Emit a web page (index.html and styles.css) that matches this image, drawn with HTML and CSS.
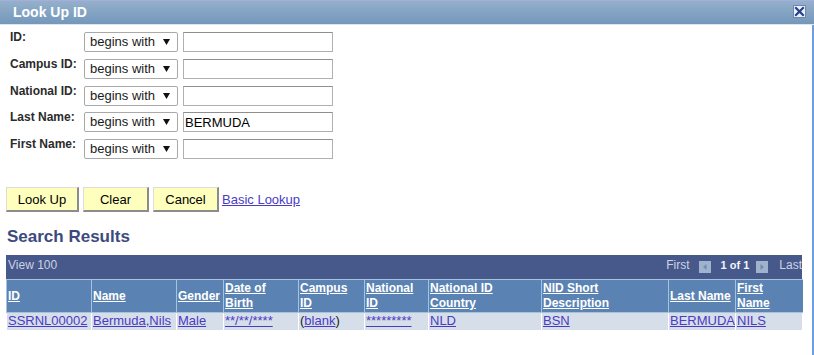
FILE: index.html
```html
<!DOCTYPE html>
<html lang="en">
<head>
<meta charset="utf-8">
<title>Look Up ID</title>
<link rel="stylesheet" href="styles.css">
</head>
<body>
<div class="titlebar">
  <span class="title">Look Up ID</span>
  <button class="close" type="button" aria-label="Close">
    <svg width="13" height="13" viewBox="0 0 13 13">
      <rect x="0.5" y="0.5" width="12" height="12" fill="#eef1f8" stroke="#6f86ad"/>
      <path d="M3 3 L10 10 M10 3 L3 10" stroke="#23408f" stroke-width="2.2" stroke-linecap="square"/>
    </svg>
  </button>
</div>
<div class="page">
  <form class="criteria">
    <div class="row">
      <label class="lbl">ID:</label>
      <div class="sel"><span>begins with</span><svg class="tri" width="7" height="6" viewBox="0 0 7 6"><path d="M0 0 H7 L3.5 6 Z" fill="#111"/></svg></div>
      <input class="txt" type="text" value="">
    </div>
    <div class="row">
      <label class="lbl">Campus ID:</label>
      <div class="sel"><span>begins with</span><svg class="tri" width="7" height="6" viewBox="0 0 7 6"><path d="M0 0 H7 L3.5 6 Z" fill="#111"/></svg></div>
      <input class="txt" type="text" value="">
    </div>
    <div class="row">
      <label class="lbl">National ID:</label>
      <div class="sel"><span>begins with</span><svg class="tri" width="7" height="6" viewBox="0 0 7 6"><path d="M0 0 H7 L3.5 6 Z" fill="#111"/></svg></div>
      <input class="txt" type="text" value="">
    </div>
    <div class="row">
      <label class="lbl">Last Name:</label>
      <div class="sel"><span>begins with</span><svg class="tri" width="7" height="6" viewBox="0 0 7 6"><path d="M0 0 H7 L3.5 6 Z" fill="#111"/></svg></div>
      <input class="txt" type="text" value="BERMUDA">
    </div>
    <div class="row">
      <label class="lbl">First Name:</label>
      <div class="sel"><span>begins with</span><svg class="tri" width="7" height="6" viewBox="0 0 7 6"><path d="M0 0 H7 L3.5 6 Z" fill="#111"/></svg></div>
      <input class="txt" type="text" value="">
    </div>
  </form>

  <div class="actions">
    <button class="btn btn-wide" type="button">Look Up</button>
    <button class="btn" type="button">Clear</button>
    <button class="btn" type="button">Cancel</button>
    <a class="basic" href="#">Basic Lookup</a>
  </div>

  <h2 class="results">Search Results</h2>

  <div class="grid">
    <div class="gridbar">
      <span class="view">View 100</span>
      <div class="nav">
        <span class="navtxt">First</span>
        <svg class="arrow a1" width="12" height="12" viewBox="0 0 12 12"><rect width="12" height="12" fill="#9fb4cc"/><path d="M7.5 3 V9 L4 6 Z" fill="#6f8db3"/></svg>
        <span class="count">1 of 1</span>
        <svg class="arrow a2" width="12" height="12" viewBox="0 0 12 12"><rect width="12" height="12" fill="#9fb4cc"/><path d="M4.5 3 V9 L8 6 Z" fill="#6f8db3"/></svg>
        <span class="navtxt">Last</span>
      </div>
    </div>
    <table class="tbl">
      <colgroup>
        <col class="c85"><col class="c85"><col class="c47"><col class="c75"><col class="c66"><col class="c64"><col class="c113"><col class="c127"><col class="c67"><col class="c67">
      </colgroup>
      <thead>
        <tr>
          <th><a href="#">ID</a></th>
          <th><a href="#">Name</a></th>
          <th><a href="#">Gender</a></th>
          <th><a href="#">Date of<br>Birth</a></th>
          <th><a href="#">Campus<br>ID</a></th>
          <th><a href="#">National<br>ID</a></th>
          <th><a href="#">National ID<br>Country</a></th>
          <th><a href="#">NID Short<br>Description</a></th>
          <th><a href="#">Last Name</a></th>
          <th><a href="#">First<br>Name</a></th>
        </tr>
      </thead>
      <tbody>
        <tr>
          <td><a href="#">SSRNL00002</a></td>
          <td><a href="#">Bermuda,Nils</a></td>
          <td><a href="#">Male</a></td>
          <td><a class="small" href="#">**/**/****</a></td>
          <td>(<a href="#">blank</a>)</td>
          <td><a class="small" href="#">*********</a></td>
          <td><a href="#">NLD</a></td>
          <td><a href="#">BSN</a></td>
          <td><a href="#">BERMUDA</a></td>
          <td><a href="#">NILS</a></td>
        </tr>
      </tbody>
    </table>
  </div>
</div>
</body>
</html>
```
FILE: styles.css
```css
html, body {
  margin: 0;
  padding: 0;
  background: #ffffff;
  font-family: Arial, "Liberation Sans", sans-serif;
}

.titlebar {
  display: flex;
  align-items: center;
  height: 24px;
  background: linear-gradient(#96b1cc, #7497bb);
  box-shadow: inset 0 1px 0 #a6aedb;
  border-bottom: 1px solid #dce6f1;
}

.title {
  padding-left: 13px;
  color: #ffffff;
  font-size: 14px;
  font-weight: bold;
  line-height: 24px;
}

.close {
  margin-left: auto;
  margin-right: 8px;
  margin-top: -2px;
  padding: 0;
  border: 0;
  background: none;
  width: 13px;
  height: 13px;
  display: block;
}
.close svg { display: block; }

.page {
  border-right: 2px solid #6d9fdf;
  min-height: 330px;
  padding: 7px 0 0 6px;
  box-sizing: border-box;
}

.criteria {
  display: flex;
  flex-direction: column;
  gap: 6.75px;
  margin: 0;
}

.row {
  display: flex;
  align-items: flex-start;
  height: 20px;
}

.lbl {
  width: 78px;
  box-sizing: border-box;
  padding-left: 4px;
  margin-top: -2px;
  font-size: 12px;
  font-weight: bold;
  line-height: 14px;
  color: #2b2b2b;
}

.sel {
  width: 94px;
  height: 20px;
  box-sizing: border-box;
  border: 1px solid #a9a9a9;
  border-radius: 2px;
  background: #ffffff;
  display: flex;
  align-items: center;
  padding: 0 7px 0 5px;
  font-size: 13px;
  color: #1a1a1a;
}
.sel span { flex: 1; line-height: 18px; }
.tri { display: block; }

.txt {
  width: 150px;
  height: 20px;
  box-sizing: border-box;
  margin: 0 0 0 5px;
  padding: 0 0 0 1px;
  border: 1px solid #b0b0b0;
  border-top-color: #8f8f8f;
  font-family: Arial, "Liberation Sans", sans-serif;
  font-size: 13px;
  color: #000;
  outline: none;
}

.actions {
  display: flex;
  align-items: center;
  gap: 4px;
  margin-top: 28px;
}

.btn {
  width: 66px;
  height: 25px;
  box-sizing: border-box;
  padding: 0;
  background: #ffffbd;
  border-style: solid;
  border-width: 1px 2px 2px 1px;
  border-color: #dcdcdc #8c8c8c #8c8c8c #dcdcdc;
  font-family: Arial, "Liberation Sans", sans-serif;
  font-size: 13px;
  color: #000;
}
.btn-wide { width: 73px; }

.basic {
  margin-left: -1px;
  font-size: 13px;
  color: #4b3bc4;
  text-decoration: underline;
}

.results {
  margin: 15px 0 8px 0;
  padding-left: 1px;
  font-size: 17px;
  line-height: 20px;
  font-weight: bold;
  color: #3c4b7e;
}

.grid {
  width: 796px;
}

.gridbar {
  display: flex;
  align-items: flex-start;
  height: 24px;
  box-sizing: border-box;
  padding-top: 3px;
  background: #47588a;
  overflow: hidden;
  white-space: nowrap;
}

.view {
  padding-left: 2px;
  font-size: 12px;
  line-height: 14px;
  color: #cdd2e4;
}

.nav {
  margin-left: auto;
  display: flex;
  align-items: flex-start;
  font-size: 12px;
  line-height: 14px;
  color: #cdd2e4;
}
.arrow { display: block; margin-top: 3px; }
.a1 { margin-left: 9px; margin-right: 10px; }
.a2 { margin-left: 7px; margin-right: 11px; }
.count {
  font-size: 11px;
  font-weight: bold;
  color: #f2f4fa;
  line-height: 14px;
}

.tbl {
  width: 796px;
  table-layout: fixed;
  border-collapse: collapse;
  border-spacing: 0;
}
.c85 { width: 85px; }
.c47 { width: 47px; }
.c75 { width: 75px; }
.c66 { width: 66px; }
.c64 { width: 64px; }
.c113 { width: 113px; }
.c127 { width: 127px; }
.c67 { width: 67px; }

.tbl th {
  background: #5a83b3;
  border: 1px solid #a8c1dc;
  border-right: 0;
  padding: 1px 1px 1px 1px;
  text-align: left;
  vertical-align: middle;
  font-size: 12px;
  font-weight: bold;
  line-height: 15px;
  white-space: nowrap;
  overflow: hidden;
}
.tbl th a {
  color: #ffffff;
  text-decoration: underline;
}

.tbl td {
  background: #d6dee9;
  border: 1px solid #ffffff;
  border-top: 0;
  padding: 0 1px 1px 1px;
  font-size: 13px;
  line-height: 16px;
  color: #1a1a1a;
  white-space: nowrap;
  overflow: hidden;
}
.tbl td a {
  color: #4b3bc4;
  text-decoration: underline;
}
.tbl td a.small { font-size: 13px; }
```
